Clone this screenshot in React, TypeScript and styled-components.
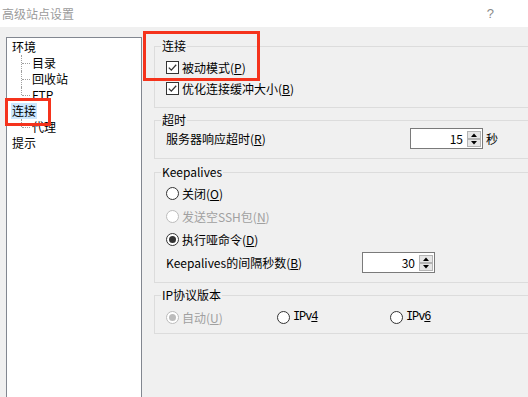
import styled, { createGlobalStyle } from "styled-components";

const GlobalStyle = createGlobalStyle`
  html, body {
    margin: 0;
    padding: 0;
    background: #f0f0f0;
  }
  body {
    font-family: "Noto Sans CJK SC", "Noto Sans", sans-serif;
    font-size: 12px;
    color: #000;
  }
`;

const Window = styled.div`
  position: relative;
  width: 528px;
  height: 397px;
  overflow: hidden;
  background: #f0f0f0;
  display: flex;
  flex-direction: column;
`;

const TitleBar = styled.div`
  height: 27px;
  flex: none;
  background: #fff;
  display: flex;
  align-items: center;
  justify-content: space-between;
  padding: 0 34px 0 2px;
  box-sizing: border-box;
  color: #9b9b9b;
  font-size: 12px;
`;

const Help = styled.span`
  font-family: "Liberation Sans", sans-serif;
  font-size: 13px;
  color: #8a8a8a;
`;

const Body = styled.div`
  flex: 1;
  min-height: 0;
  display: flex;
  padding: 10px 0 0 6px;
`;

// 왼쪽 트리
const Tree = styled.div`
  width: 136px;
  flex: none;
  box-sizing: border-box;
  margin-bottom: -6px;
  background: #fff;
  border: 1px solid #828790;
  padding: 1px 0 0 5px;
`;

const TreeRow = styled.div<{ $child?: boolean; $last?: boolean }>`
  position: relative;
  height: 16px;
  line-height: 16px;
  padding-left: ${({ $child }) => ($child ? "20px" : "0")};
  white-space: nowrap;
  &::before {
    content: "";
    display: ${({ $child }) => ($child ? "block" : "none")};
    position: absolute;
    left: 9px;
    top: 0;
    height: ${({ $last }) => ($last ? "8px" : "16px")};
    border-left: 1px dotted #a0a0a0;
  }
  &::after {
    content: "";
    display: ${({ $child }) => ($child ? "block" : "none")};
    position: absolute;
    left: 10px;
    top: 8px;
    width: 8px;
    border-top: 1px dotted #a0a0a0;
  }
`;

const TreeLabel = styled.span<{ $selected?: boolean }>`
  display: inline-block;
  padding: 0 1px;
  margin-left: -1px;
  background: ${({ $selected }) => ($selected ? "#cce8ff" : "transparent")};
`;

// 오른쪽 설정 영역
const Panel = styled.div`
  flex: 1;
  margin-right: -40px;
  padding: 1px 0 0 12px;
  display: flex;
  flex-direction: column;
`;

const Group = styled.fieldset<{ $gap: number; $pad: string }>`
  margin: ${({ $gap }) => $gap}px 0 0;
  padding: ${({ $pad }) => $pad};
  border: 1px solid #dcdcdc;
  min-width: 0;
`;

const Legend = styled.legend`
  margin-left: -5px;
  padding: 0 1px;
  line-height: 16px;
  font-size: 12px;
`;

const Row = styled.div<{ $h: number }>`
  height: ${({ $h }) => $h}px;
  display: flex;
  align-items: center;
  white-space: nowrap;
`;

const Label = styled.span<{ $w?: number; $disabled?: boolean }>`
  width: ${({ $w }) => ($w ? `${$w}px` : "auto")};
  flex: none;
  color: ${({ $disabled }) => ($disabled ? "#a0a0a0" : "#000")};
`;

const Key = styled.span`
  text-decoration: underline;
`;

const Option = styled.span`
  display: flex;
  align-items: center;
  gap: 3px;
`;

const CheckBox = styled.span`
  width: 13px;
  height: 13px;
  box-sizing: border-box;
  border: 1px solid #333;
  background: #fff;
  display: flex;
  align-items: center;
  justify-content: center;
`;

const RadioDot = styled.span<{ $checked?: boolean; $disabled?: boolean }>`
  position: relative;
  width: 13px;
  height: 13px;
  box-sizing: border-box;
  border-radius: 50%;
  border: 1px solid ${({ $disabled }) => ($disabled ? "#bcbcbc" : "#333")};
  background: #fff;
  &::after {
    content: "";
    display: ${({ $checked }) => ($checked ? "block" : "none")};
    position: absolute;
    inset: 2px;
    border-radius: 50%;
    background: ${({ $disabled }) => ($disabled ? "#bcbcbc" : "#333")};
  }
`;

const IpGrid = styled.div`
  display: grid;
  grid-template-columns: 111px 113px auto;
  align-items: center;
  height: 22px;
`;

const IpText = styled.span`
  font-family: "Liberation Mono", monospace;
  font-size: 12px;
  letter-spacing: -1.1px;
`;

const Spin = styled.div`
  width: 73px;
  height: 21px;
  flex: none;
  box-sizing: border-box;
  border: 1px solid #7a7a7a;
  background: #fff;
  display: flex;
  align-items: center;
  padding-right: 1px;
`;

const SpinValue = styled.span`
  flex: 1;
  text-align: right;
  padding-right: 4px;
`;

const SpinButtons = styled.div`
  display: flex;
  flex-direction: column;
  width: 14px;
`;

const SpinBtn = styled.span`
  height: 8px;
  box-sizing: border-box;
  border: 1px solid #b4b4b4;
  background: #e6e6e6;
  display: flex;
  align-items: center;
  justify-content: center;
`;

const Unit = styled.span`
  margin-left: 3px;
`;

// 빨간 표시 박스
const Marker = styled.div<{ $x: number; $y: number; $w: number; $h: number }>`
  position: absolute;
  left: ${({ $x }) => $x}px;
  top: ${({ $y }) => $y}px;
  width: ${({ $w }) => $w}px;
  height: ${({ $h }) => $h}px;
  box-sizing: border-box;
  border: 3px solid #f5331c;
  pointer-events: none;
`;

const Check = () => (
  <CheckBox>
    <svg width="11" height="11" viewBox="0 0 11 11">
      <path d="M1.8 5.6 L4.3 8.1 L9.2 2.8" fill="none" stroke="#333" strokeWidth="1.3" />
    </svg>
  </CheckBox>
);

const Arrow = ({ up }: { up?: boolean }) => (
  <svg width="6" height="4" viewBox="0 0 6 4">
    <path d={up ? "M0 4 L3 0.5 L6 4 Z" : "M0 0 L3 3.5 L6 0 Z"} fill="#000" />
  </svg>
);

const SpinBox = ({ value }: { value: number }) => (
  <Spin>
    <SpinValue>{value}</SpinValue>
    <SpinButtons>
      <SpinBtn>
        <Arrow up />
      </SpinBtn>
      <SpinBtn>
        <Arrow />
      </SpinBtn>
    </SpinButtons>
  </Spin>
);

const App = () => {
  return (
    <Window>
      <GlobalStyle />
      <TitleBar>
        <span>高级站点设置</span>
        <Help>?</Help>
      </TitleBar>
      <Body>
        <Tree>
          <TreeRow>
            <TreeLabel>环境</TreeLabel>
          </TreeRow>
          <TreeRow $child>
            <TreeLabel>目录</TreeLabel>
          </TreeRow>
          <TreeRow $child>
            <TreeLabel>回收站</TreeLabel>
          </TreeRow>
          <TreeRow $child $last>
            <TreeLabel>FTP</TreeLabel>
          </TreeRow>
          <TreeRow>
            <TreeLabel $selected>连接</TreeLabel>
          </TreeRow>
          <TreeRow $child $last>
            <TreeLabel>代理</TreeLabel>
          </TreeRow>
          <TreeRow>
            <TreeLabel>提示</TreeLabel>
          </TreeRow>
        </Tree>

        <Panel>
          <Group $gap={0} $pad="3px 0 8px 11px">
            <Legend>连接</Legend>
            <Row $h={21}>
              <Option>
                <Check />
                <Label>
                  被动模式(<Key>P</Key>)
                </Label>
              </Option>
            </Row>
            <Row $h={21}>
              <Option>
                <Check />
                <Label>
                  优化连接缓冲大小(<Key>B</Key>)
                </Label>
              </Option>
            </Row>
          </Group>

          <Group $gap={4} $pad="0 0 9px 11px">
            <Legend>超时</Legend>
            <Row $h={21}>
              <Label $w={244}>
                服务器响应超时(<Key>R</Key>)
              </Label>
              <SpinBox value={15} />
              <Unit>秒</Unit>
            </Row>
          </Group>

          <Group $gap={5} $pad="2px 0 8px 11px">
            <Legend>Keepalives</Legend>
            <Row $h={23}>
              <Option>
                <RadioDot />
                <Label>
                  关闭(<Key>O</Key>)
                </Label>
              </Option>
            </Row>
            <Row $h={23}>
              <Option>
                <RadioDot $disabled />
                <Label $disabled>
                  发送空SSH包(<Key>N</Key>)
                </Label>
              </Option>
            </Row>
            <Row $h={23}>
              <Option>
                <RadioDot $checked />
                <Label>
                  执行哑命令(<Key>D</Key>)
                </Label>
              </Option>
            </Row>
            <Row $h={23}>
              <Label $w={196}>
                Keepalives的间隔秒数(<Key>B</Key>)
              </Label>
              <SpinBox value={30} />
            </Row>
          </Group>

          <Group $gap={4} $pad="3px 0 5px 11px">
            <Legend>IP协议版本</Legend>
            <IpGrid>
              <Option>
                <RadioDot $checked $disabled />
                <Label $disabled>
                  自动(<Key>U</Key>)
                </Label>
              </Option>
              <Option>
                <RadioDot />
                <IpText>
                  IPv<Key>4</Key>
                </IpText>
              </Option>
              <Option>
                <RadioDot />
                <IpText>
                  IPv<Key>6</Key>
                </IpText>
              </Option>
            </IpGrid>
          </Group>
        </Panel>
      </Body>

      <Marker $x={5} $y={98} $w={46} $h={28} />
      <Marker $x={143} $y={31} $w={117} $h={50} />
    </Window>
  );
};

export default App;
